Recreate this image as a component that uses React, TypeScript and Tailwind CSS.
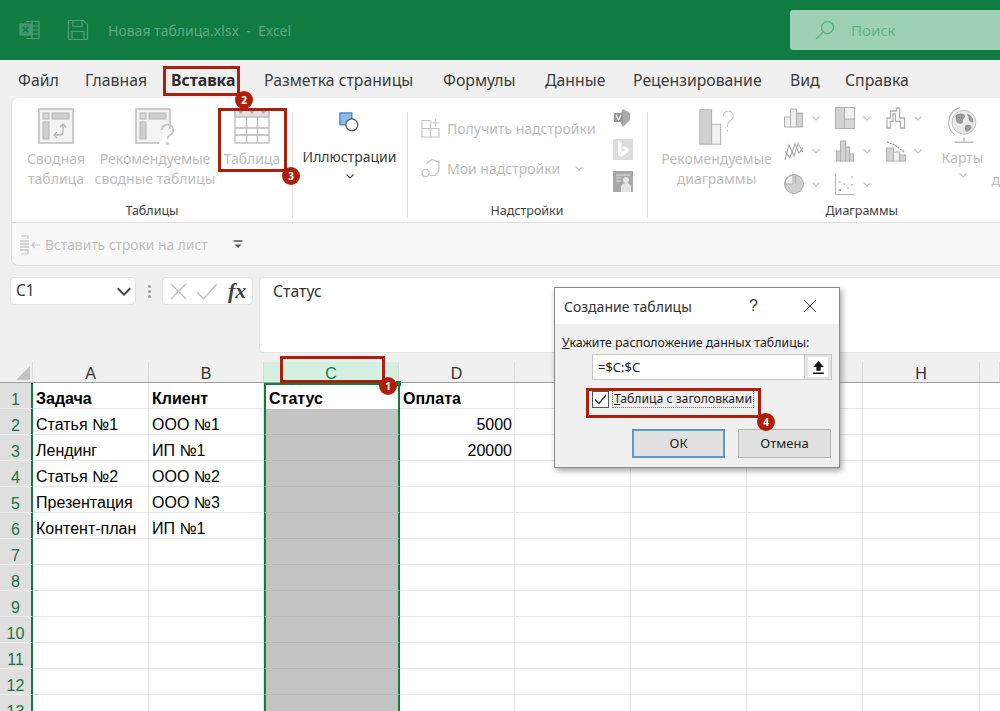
import React from "react";

const G = "#c2c2c2";

function ExcelIcon() {
  return (
    <svg width="22" height="22" viewBox="0 0 22 22" fill="none" stroke="#4f9f78" strokeWidth="1.2">
      <path d="M7 2.5h13v17H7" />
      <path d="M7 7h13M7 11h13M7 15h13M13 2.5v17" />
      <rect x="1" y="5" width="11" height="11" fill="#3e9268" stroke="#4f9f78" />
      <path d="M4 8l5 5M9 8l-5 5" stroke="#107c41" strokeWidth="1.6" />
    </svg>
  );
}
function SaveIcon() {
  return (
    <svg width="22" height="22" viewBox="0 0 22 22" fill="none" stroke="#4f9f78" strokeWidth="1.2">
      <path d="M1.5 1.5h15l4 4v15h-19z" />
      <path d="M6 1.5v6h9v-6M5 20.5v-8h12v8" />
    </svg>
  );
}
function PivotIcon() {
  return (
    <svg width="36" height="36" viewBox="0 0 36 36" fill="none">
      <rect x="1" y="1" width="34" height="34" fill="#f3f3f3" stroke="#bdbdbd" strokeWidth="1.5" />
      <rect x="5" y="5" width="6" height="6" fill="#d8d8d8" stroke="#b5b5b5" />
      <rect x="14" y="5" width="17" height="6" fill="#cfcfcf" stroke="#b5b5b5" />
      <rect x="5" y="14" width="6" height="17" fill="#cfcfcf" stroke="#b5b5b5" />
      <path d="M25 17v7a3 3 0 0 1-3 3h-6M22 19l3-3 3 3M19 24l-3 3 3 3" stroke="#b5b5b5" strokeWidth="1.3" />
    </svg>
  );
}
function RecPivotIcon() {
  return (
    <svg width="40" height="38" viewBox="0 0 40 38" fill="none">
      <path d="M24 35H1V1h34v20" fill="#f3f3f3" stroke="#bdbdbd" strokeWidth="1.5" />
      <rect x="5" y="5" width="6" height="6" fill="#d8d8d8" stroke="#b5b5b5" />
      <rect x="14" y="5" width="17" height="6" fill="#cfcfcf" stroke="#b5b5b5" />
      <rect x="5" y="14" width="6" height="17" fill="#cfcfcf" stroke="#b5b5b5" />
      <path d="M27 22a5.5 5.5 0 1 1 8 5c-2 1.200-2.500 2-2.500 4" stroke="#c6c6c6" strokeWidth="2" />
      <circle cx="32.500" cy="35.500" r="1.500" fill="#c6c6c6" />
    </svg>
  );
}
function TableIcon() {
  return (
    <svg width="36" height="36" viewBox="0 0 36 36" fill="none" stroke="#b9b9b9" strokeWidth="1.3">
      <rect x="1" y="1" width="34" height="34" fill="#fff" />
      <rect x="1" y="1" width="34" height="8" fill="#e0e0e0" />
      <path d="M1 20h34M1 27h34M12.500 9v26M23.500 9v26" />
      <path d="M4 3h5l-2.500 3zM15.500 3h5l-2.500 3zM27 3h5l-2.500 3z" fill="#a9a9a9" stroke="none" />
    </svg>
  );
}
function ShapesIcon() {
  return (
    <svg width="22" height="22" viewBox="0 0 24 24" fill="none">
      <rect x="1" y="1" width="13" height="13" fill="#8dbce6" stroke="#3f86c6" strokeWidth="1.400" />
      <circle cx="14" cy="14" r="6.500" fill="#fff" stroke="#555" strokeWidth="1.400" />
    </svg>
  );
}
function Chevron({ color = G, size = 10 }: { color?: string; size?: number }) {
  return (
    <svg width={size} height={size} viewBox="0 0 10 10" fill="none" stroke={color} strokeWidth="1.100">
      <path d="M1.500 3.500L5 7l3.500-3.500" />
    </svg>
  );
}
function GetAddinIcon() {
  return (
    <svg width="20" height="20" viewBox="0 0 20 20" fill="none" stroke="#c4c4c4" strokeWidth="1.200">
      <path d="M9.500 2.500H1v16.500h17V10.500H1M9.500 2.500V19M14.500 1v8M10.500 5h8" />
    </svg>
  );
}
function MyAddinIcon() {
  return (
    <svg width="20" height="20" viewBox="0 0 20 20" fill="none" stroke="#c4c4c4" strokeWidth="1.200">
      <path d="M5 5.500L11 1.500l7 3v8l-4 5H9" />
      <circle cx="4.500" cy="15" r="3.500" />
    </svg>
  );
}
function VisioIcon() {
  return (
    <svg width="20" height="20" viewBox="0 0 20 20">
      <path d="M10 1l7 4v7l-7 7-4-7V8z" fill="#a9a9a9" />
      <rect x="1" y="5" width="9" height="9" fill="#9a9a9a" />
      <path d="M3 7l2.500 5L8 7" fill="none" stroke="#fff" strokeWidth="1.200" />
    </svg>
  );
}
function BingIcon() {
  return (
    <svg width="20" height="21" viewBox="0 0 20 21">
      <rect width="20" height="21" fill="#dcdcdc" />
      <path d="M5 2l3.500 1.200v10l4.500-2.300-2.200-1-1.200-3L15.500 9v3.500L8.500 18 5 16z" fill="#fff" />
    </svg>
  );
}
function PeopleIcon() {
  return (
    <svg width="20" height="21" viewBox="0 0 20 21">
      <rect width="20" height="21" fill="#a8a8a8" />
      <circle cx="13" cy="9" r="3" fill="#e4e4e4" />
      <path d="M8 21v-5a5 4 0 0 1 10 0v5z" fill="#e4e4e4" />
      <path d="M3 4h14M3 7h5M3 10h5" stroke="#e4e4e4" strokeWidth="1.200" />
    </svg>
  );
}
function RecChartIcon() {
  return (
    <svg width="40" height="38" viewBox="0 0 40 42" fill="none">
      <rect x="1" y="2" width="13" height="38" fill="#d0d0d0" stroke="#b5b5b5" strokeWidth="1.200" />
      <rect x="14" y="18" width="10" height="22" fill="#f2f2f2" stroke="#b5b5b5" strokeWidth="1.200" />
      <path d="M27 9a5.500 5.500 0 1 1 8.500 4.500C33 15 31.500 16.500 31.500 21" stroke="#c4c4c4" strokeWidth="1.200" />
      <circle cx="31.500" cy="25" r="1" fill="#c4c4c4" />
    </svg>
  );
}
const s = { fill: "#d2d2d2", stroke: "#b0b0b0" };
function ChartBars() {
  return (
    <svg width="20" height="20" viewBox="0 0 20 20">
      <rect x="0.500" y="9" width="6" height="10" {...s} fill="#efefef" />
      <rect x="6.500" y="1" width="6" height="18" {...s} fill="#efefef" />
      <rect x="12.500" y="5" width="6" height="14" {...s} />
    </svg>
  );
}
function ChartTree() {
  return (
    <svg width="20" height="22" viewBox="0 0 20 22">
      <rect x="0.500" y="0.500" width="19" height="21" fill="#f0f0f0" stroke="#b0b0b0" />
      <rect x="0.500" y="0.500" width="9" height="21" {...s} />
      <rect x="9.500" y="12" width="10" height="9.500" fill="#d8d8d8" stroke="#b0b0b0" />
    </svg>
  );
}
function ChartWaterfall() {
  return (
    <svg width="20" height="22" viewBox="0 0 20 22" fill="none" stroke="#b0b0b0" strokeWidth="1.300">
      <path d="M1 21v-10h3.500V4h6V1h3v10h5v10h-4v-6.500h-5V7H7v7.500H4.500V21z" />
    </svg>
  );
}
function ChartLine() {
  return (
    <svg width="20" height="22" viewBox="0 0 20 22" fill="none" stroke="#aaa" strokeWidth="1.100">
      <path d="M1 20L5 5l5 11 4-12 5 8" />
      <path d="M1 11l5 7 5-14 4 9 4-5" />
    </svg>
  );
}
function ChartStat() {
  return (
    <svg width="18" height="22" viewBox="0 0 18 22">
      <rect x="0.500" y="11" width="4" height="10" {...s} />
      <rect x="4.500" y="1" width="5" height="20" {...s} />
      <rect x="9.500" y="7" width="4" height="14" {...s} />
      <rect x="13.500" y="14" width="4" height="7" {...s} />
    </svg>
  );
}
function ChartCombo() {
  return (
    <svg width="20" height="22" viewBox="0 0 20 22">
      <rect x="0.500" y="8" width="7" height="13" {...s} />
      <rect x="7.500" y="12" width="6" height="9" fill="#f0f0f0" stroke="#b0b0b0" />
      <rect x="13.500" y="15" width="6" height="6" {...s} />
      <path d="M1 2l8 3 9 7" fill="none" stroke="#999" strokeWidth="1.300" strokeDasharray="2 1" />
    </svg>
  );
}
function ChartPie() {
  return (
    <svg width="20" height="20" viewBox="0 0 20 20">
      <circle cx="10" cy="10" r="9.500" fill="#cfcfcf" stroke="#b0b0b0" />
      <path d="M9 1v9H1A9 9 0 0 1 9 1z" fill="#efefef" stroke="#b0b0b0" />
      <path d="M11.500 1v8.500" stroke="#b0b0b0" />
    </svg>
  );
}
function ChartScatter() {
  return (
    <svg width="20" height="22" viewBox="0 0 20 22">
      <path d="M0.500 0v21.500H20" fill="none" stroke="#b5b5b5" />
      <circle cx="5" cy="17" r="1.300" fill="#a5a5a5" />
      <circle cx="9" cy="11" r="0.900" fill="#bdbdbd" />
      <circle cx="13" cy="15" r="0.900" fill="#bdbdbd" />
      <circle cx="17" cy="4" r="0.900" fill="#bdbdbd" />
      <circle cx="17" cy="12" r="0.900" fill="#bdbdbd" />
      <circle cx="5" cy="9" r="0.900" fill="#bdbdbd" />
    </svg>
  );
}
function GlobeIcon() {
  return (
    <svg width="34" height="42" viewBox="0 0 34 44" fill="none">
      <circle cx="18" cy="17" r="12.500" fill="#e8e8e8" stroke="#c0c0c0" />
      <path d="M9 10c3-3 9-3 10 0s-3 3-2 6-5 4-7 0zM22 8c3 1 6 5 6 9-2 1-5-1-5-4s-3-3-1-5zM20 20c3-1 6 0 6 2s-3 5-5 5-3-5-1-7z" fill="#999" />
      <path d="M14 1.500A16.500 16.500 0 0 0 8 30" stroke="#bbb" strokeWidth="1.300" />
      <path d="M18 33v4M8 38h20" stroke="#bbb" strokeWidth="1.500" />
    </svg>
  );
}
function InsertRowsIcon() {
  return (
    <svg width="22" height="20" viewBox="0 0 22 20" fill="none" stroke="#c4c4c4" strokeWidth="1.200">
      <path d="M1 1h7v3M1 19h7v-3" />
      <path d="M0 6h9M0 9h9M0 12h9M0 15h9" strokeWidth="1.500" />
      <path d="M20 10h-8M15 7l-3 3 3 3" />
    </svg>
  );
}
function SearchIcon() {
  return (
    <svg width="20" height="20" viewBox="0 0 20 20" fill="none" stroke="#5fb385" strokeWidth="1.500">
      <circle cx="12.500" cy="7.500" r="6" />
      <path d="M8 12l-7 7" />
    </svg>
  );
}

function RibbonBtn({ icon, lines, w }: { icon: React.ReactNode; lines: string[]; w: string }) {
  return (
    <div className={`flex flex-col items-center ${w}`}>
      <div className="flex h-[39px] items-start justify-center">{icon}</div>
      <div className="mt-[2px] text-center text-[14px] leading-[20px] text-[#bdbdbd]">
        {lines.map((l) => (
          <div key={l} className="whitespace-nowrap">{l}</div>
        ))}
      </div>
    </div>
  );
}

function GroupLabel({ children }: { children: React.ReactNode }) {
  return <div className="absolute bottom-[3px] left-0 right-0 text-center text-[12.5px] leading-[16px] text-[#444]">{children}</div>;
}

function SmallChart({ icon }: { icon: React.ReactNode }) {
  return (
    <div className="flex h-[33px] w-[51px] items-center gap-[6px]">
      <div className="flex w-[21px] justify-center">{icon}</div>
      <Chevron />
    </div>
  );
}

const cols = ["A", "B", "C", "D", "E", "F", "G", "H", ""];
const widths = ["w-[116px]", "w-[115px]", "w-[135px]", "w-[116px]", "w-[116px]", "w-[116px]", "w-[116px]", "w-[117px]", "w-[20px]"];

type RowData = { a?: string; b?: string; c?: string; d?: string; bold?: boolean };
const rows: RowData[] = [
  { a: "Задача", b: "Клиент", c: "Статус", d: "Оплата", bold: true },
  { a: "Статья №1", b: "ООО №1", d: "5000" },
  { a: "Лендинг", b: "ИП №1", d: "20000" },
  { a: "Статья №2", b: "ООО №2" },
  { a: "Презентация", b: "ООО №3" },
  { a: "Контент-план", b: "ИП №1" },
  {},
  {},
  {},
  {},
  {},
  {},
  {},
];

function Badge({ n, className }: { n: number; className: string }) {
  return (
    <div className={`absolute flex h-[18px] w-[18px] items-center justify-center rounded-full bg-[#ae1f0b] text-[10px] font-bold text-white ${className}`}>
      {n}
    </div>
  );
}

function Tab({ children, className = "" }: { children: React.ReactNode; className?: string }) {
  return <div className={`whitespace-nowrap ${className}`}>{children}</div>;
}

export default function App() {
  return (
    <div className="relative h-[711px] w-[1000px] overflow-hidden bg-[#f0f0f0] [font-family:Noto_Sans,sans-serif]">
      {/* Title bar */}
      <div className="flex h-[60px] items-center bg-[#107c41] pl-[19px]">
        <ExcelIcon />
        <div className="ml-[26px]"><SaveIcon /></div>
        <div className="ml-[19px] flex-1 whitespace-nowrap text-[14px] text-[#5fa985]">Новая таблица.xlsx&nbsp; -&nbsp; Excel</div>
        <div className="flex h-[40px] w-[210px] items-center gap-[16px] rounded-l-[3px] bg-[#9ed0b5] pl-[25px] text-[15px] text-[#5fb385]">
          <SearchIcon />
          Поиск
        </div>
      </div>

      {/* Tabs */}
      <div className="flex h-[38px] items-center pl-[18px] pt-[4px] text-[15.800px] text-[#3c3c3c]">
        <Tab className="w-[67px]">Файл</Tab>
        <Tab className="w-[86px]">Главная</Tab>
        <Tab className="relative w-[93px] font-bold text-[#2b2b2b]">
          Вставка
          <div className="absolute bottom-[-3px] left-0 h-[2px] w-[63px] bg-[#107c41]" />
        </Tab>
        <Tab className="w-[179px]">Разметка страницы</Tab>
        <Tab className="w-[102px]">Формулы</Tab>
        <Tab className="w-[88px]">Данные</Tab>
        <Tab className="w-[157px]">Рецензирование</Tab>
        <Tab className="w-[55px]">Вид</Tab>
        <Tab>Справка</Tab>
      </div>

      {/* Ribbon */}
      <div className="ml-[11px] overflow-hidden rounded-tl-[8px] rounded-bl-[8px] border-l border-b border-[#dedede]">
        <div className="flex h-[125px] border-b border-[#dedede] bg-white pt-[10px]">
          <div className="relative flex w-[280px] shrink-0 pl-[12px]">
            <RibbonBtn icon={<PivotIcon />} lines={["Сводная", "таблица"]} w="w-[64px]" />
            <RibbonBtn icon={<RecPivotIcon />} lines={["Рекомендуемые", "сводные таблицы"]} w="ml-[6px] w-[122px]" />
            <RibbonBtn icon={<TableIcon />} lines={["Таблица"]} w="ml-[7px] w-[58px]" />
            <GroupLabel>Таблицы</GroupLabel>
          </div>
          <div className="my-[4px] w-px bg-[#dedede]" />
          <div className="flex w-[114px] shrink-0 flex-col items-center pt-[4px] text-[14px] text-[#3a3a3a]">
            <div className="h-[34px]"><ShapesIcon /></div>
            <div className="leading-[22px]">Иллюстрации</div>
            <div className="mt-[3px]"><Chevron color="#444" /></div>
          </div>
          <div className="my-[4px] w-px bg-[#dedede]" />
          <div className="relative flex w-[240px] shrink-0 pl-[14px] text-[14px] text-[#bdbdbd]">
            <div className="flex w-[192px] flex-col pt-[10px]">
              <div className="flex h-[20px] items-center gap-[6px] whitespace-nowrap"><GetAddinIcon />Получить надстройки</div>
              <div className="mt-[20px] flex h-[20px] items-center gap-[6px] whitespace-nowrap">
                <MyAddinIcon />Мои надстройки
                <span className="ml-[8px]"><Chevron /></span>
              </div>
            </div>
            <div className="flex flex-col items-center gap-[11px]">
              <VisioIcon />
              <BingIcon />
              <PeopleIcon />
            </div>
            <GroupLabel>Надстройки</GroupLabel>
          </div>
          <div className="my-[4px] w-px bg-[#dedede]" />
          <div className="relative flex flex-1 pl-[13px]">
            <RibbonBtn icon={<RecChartIcon />} lines={["Рекомендуемые", "диаграммы"]} w="w-[112px]" />
            <div className="ml-[11px] mt-[-7px] flex w-[154px] flex-wrap content-start">
              <SmallChart icon={<ChartBars />} />
              <SmallChart icon={<ChartTree />} />
              <SmallChart icon={<ChartWaterfall />} />
              <SmallChart icon={<ChartLine />} />
              <SmallChart icon={<ChartStat />} />
              <SmallChart icon={<ChartCombo />} />
              <SmallChart icon={<ChartPie />} />
              <SmallChart icon={<ChartScatter />} />
            </div>
            <div className="ml-[2px] mt-[-2px] flex w-[46px] flex-col items-center text-[14px] text-[#bdbdbd]">
              <GlobeIcon />
              <div className="leading-[20px]">Карты</div>
              <div className="mt-[2px]"><Chevron /></div>
            </div>
            <div className="ml-[6px] mt-[62px] text-[14px] leading-[20px] text-[#bdbdbd]">д</div>
            <div className="absolute bottom-[3px] left-[178px] text-[12.5px] leading-[16px] text-[#444]">Диаграммы</div>
          </div>
        </div>
        <div className="flex h-[42px] items-center bg-[#f8f8f8] pl-[8px] pt-[2px] text-[13.800px] text-[#c0c0c0]">
          <InsertRowsIcon />
          <span className="ml-[3px] whitespace-nowrap">Вставить строки на лист</span>
          <svg className="ml-[24px]" width="12" height="12" viewBox="0 0 12 12" fill="none" stroke="#555">
            <path d="M1.500 2h9" strokeWidth="1.400" />
            <path d="M2.500 5.500h7L6 9z" fill="#555" stroke="none" />
          </svg>
        </div>
      </div>

      {/* Formula bar */}
      <div className="mt-[11px] flex items-start pl-[10px]">
        <div className="flex h-[28px] w-[126px] items-center justify-between rounded-[4px] border border-[#e2e2e2] bg-white pl-[5px] pr-[2px] text-[15.500px] text-[#333]">
          C1
          <Chevron color="#444" size={18} />
        </div>
        <div className="flex h-[28px] w-[26px] flex-col items-center justify-center gap-[2px]">
          <div className="h-[3px] w-[3px] rounded-full bg-[#999]" />
          <div className="h-[3px] w-[3px] rounded-full bg-[#999]" />
          <div className="h-[3px] w-[3px] rounded-full bg-[#999]" />
        </div>
        <div className="flex h-[28px] w-[91px] items-center gap-[9px] rounded-[4px] border border-[#e2e2e2] bg-white pl-[7px] text-[#bbb]">
          <svg width="17" height="17" viewBox="0 0 16 16" fill="none" stroke="#c0c0c0" strokeWidth="1.300"><path d="M1 1l14 14M15 1L1 15" /></svg>
          <svg width="22" height="17" viewBox="0 0 20 16" fill="none" stroke="#c0c0c0" strokeWidth="1.300"><path d="M1 9l6 6L19 1" /></svg>
          <span className="ml-[1px] text-[22px] font-bold italic leading-none text-[#444] [font-family:Liberation_Serif,serif]">fx</span>
        </div>
        <div className="ml-[6px] h-[76px] flex-1 rounded-l-[4px] border border-r-0 border-[#e2e2e2] bg-white pl-[13px] pt-[2px] text-[15.800px] text-[#333]">Статус</div>
      </div>

      {/* Sheet */}
      <div className="mt-[9px] bg-white [font-family:Liberation_Sans,sans-serif]">
        <div className="flex h-[21px] border-b border-[#9f9f9f] bg-[#f0f0f0]">
          <div className="relative w-[33px] shrink-0 border-r border-[#dadada]">
            <div className="absolute bottom-[2px] right-[2px] h-0 w-0 border-b-[14px] border-l-[14px] border-b-[#c4c4c4] border-l-transparent" />
          </div>
          {cols.map((c, i) => (
            <div
              key={i}
              className={`${widths[i]} shrink-0 border-r border-[#dadada] pt-[1px] text-center text-[16px] leading-[21px] ${i === 2 ? "bg-[#d3f0e0] text-[#107c41]" : "text-[#333]"}`}
            >
              {c}
            </div>
          ))}
        </div>
        {rows.map((r, idx) => (
          <div key={idx} className="flex h-[26px]">
            <div className="w-[33px] shrink-0 border-r-2 border-b border-r-[#107c41] border-b-[#eeeeee] bg-[#dfdfdf] pt-[3px] text-center text-[16px] leading-[27px] text-[#217346]">
              {idx + 1}
            </div>
            <div className="w-[116px] shrink-0 border-r border-b border-[#e6e6e6] pl-[3px] pt-[3px] text-[16px] leading-[26px] text-black">
              <span className={r.bold ? "font-bold" : ""}>{r.a}</span>
            </div>
            <div className="w-[115px] shrink-0 border-r border-b border-[#e6e6e6] pl-[3px] pt-[3px] text-[16px] leading-[26px] text-black">
              <span className={r.bold ? "font-bold" : ""}>{r.b}</span>
            </div>
            <div className={`w-[136px] shrink-0 border-x-2 border-x-[#107c41] pl-[3px] pt-[1px] text-[16px] leading-[26px] text-black ${idx === 0 ? "border-t-2 border-t-[#107c41] bg-white font-bold" : "border-b border-b-[#b8b8b8] bg-[#c4c4c4]"}`}>
              {r.c}
            </div>
            <div className={`w-[115px] shrink-0 border-r border-b border-[#e6e6e6] pl-[3px] pr-[2px] pt-[3px] text-[16px] leading-[26px] text-black ${r.bold ? "text-left font-bold" : "text-right"}`}>
              {r.d}
            </div>
            <div className="w-[116px] shrink-0 border-r border-b border-[#e6e6e6]" />
            <div className="w-[116px] shrink-0 border-r border-b border-[#e6e6e6]" />
            <div className="w-[116px] shrink-0 border-r border-b border-[#e6e6e6]" />
            <div className="w-[117px] shrink-0 border-r border-b border-[#e6e6e6]" />
            <div className="w-[20px] shrink-0 border-b border-[#e6e6e6]" />
          </div>
        ))}
      </div>

      {/* Dialog */}
      <div className="absolute left-[554px] top-[287px] h-[181px] w-[286px] border border-[#8a8a8a] bg-[#f0f0f0] shadow-[2px_3px_6px_rgba(0,0,0,0.35)]">
        <div className="flex h-[36px] items-center bg-white pl-[9px] text-[14px] text-[#333]">
          <span className="w-[185px]">Создание таблицы</span>
          <span className="w-[54px] text-[16px] [font-family:Liberation_Sans,sans-serif]">?</span>
          <svg width="14" height="14" viewBox="0 0 14 14" fill="none" stroke="#444" strokeWidth="1"><path d="M1 1l12 12M13 1L1 13" /></svg>
        </div>
        <div className="pl-[7px] pt-[10px] text-[12.350px] leading-[18px] text-[#222]">
          <span className="underline">У</span>кажите расположение данных таблицы:
        </div>
        <div className="ml-[37px] mt-[2px] flex h-[26px] w-[240px] border border-[#c8c8c8] bg-white">
          <div className="flex-1 pl-[5px] text-[13px] leading-[24px] text-[#222]">=$C:$C</div>
          <div className="flex w-[27px] items-center justify-center border-l border-[#c8c8c8] bg-[#e4e4e4]">
            <div className="flex h-[20px] w-[20px] items-center justify-center bg-white">
              <svg width="13" height="14" viewBox="0 0 12 13"><path d="M6 1L1 6.500h3V10h4V6.500h3zM1 11.500h10V13H1z" fill="#111" /></svg>
            </div>
          </div>
        </div>
        <div className="ml-[37px] mt-[10px] flex h-[18px] items-center">
          <div className="flex h-[17px] w-[17px] items-center justify-center border border-[#555] bg-white">
            <svg width="13" height="11" viewBox="0 0 13 11" fill="none" stroke="#333" strokeWidth="1.300"><path d="M1 5.500l4 4 7-8.500" /></svg>
          </div>
          <div className="ml-[3px] whitespace-nowrap border border-dotted border-[#777] px-[1px] text-[12.200px] leading-[16px] text-[#222]">
            <span className="underline">Т</span>аблица с заголовками
          </div>
        </div>
        <div className="ml-[77px] mt-[21px] flex gap-[13px] text-[13px]">
          <div className="flex h-[29px] w-[93px] items-center justify-center border-2 border-[#5b9bc9] bg-[#e1e1e1] text-[#222]">ОК</div>
          <div className="flex h-[29px] w-[93px] items-center justify-center border border-[#b5b5b5] bg-[#e1e1e1] text-[#222]">Отмена</div>
        </div>
      </div>

      {/* Annotations */}
      <div className="absolute left-[163px] top-[66px] h-[30px] w-[77px] border-[3px] border-[#ae1f0b]" />
      <Badge n={2} className="left-[235px] top-[91px]" />
      <div className="absolute left-[218px] top-[108px] h-[64px] w-[69px] border-[3px] border-[#ae1f0b]" />
      <Badge n={3} className="left-[282px] top-[167px]" />
      <div className="absolute left-[280px] top-[356px] h-[27px] w-[105px] border-[3px] border-[#ae1f0b]" />
      <div className="absolute left-[396px] top-[381px] h-[5px] w-[5px] bg-[#107c41]" />
      <Badge n={1} className="left-[379px] top-[377px]" />
      <div className="absolute left-[586px] top-[388px] h-[30px] w-[175px] border-[3px] border-[#ae1f0b]" />
      <Badge n={4} className="left-[757px] top-[413px]" />
    </div>
  );
}
